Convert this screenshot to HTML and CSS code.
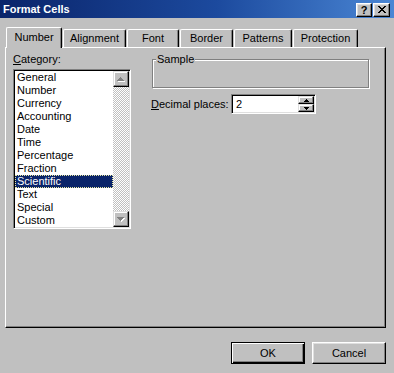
FILE: index.html
```html
<!DOCTYPE html>
<html>
<head>
<meta charset="utf-8">
<title>Format Cells</title>
<link rel="stylesheet" href="styles.css">
</head>
<body>
<div class="window">
  <div class="titlebar">
    <span class="title">Format Cells</span>
    <div class="tbtns">
      <span class="tbtn help">?</span>
      <span class="tbtn close"><svg width="8" height="7" viewBox="0 0 8 7"><path d="M0 0h2v1H0zM6 0h2v1H6zM1 1h2v1H1zM5 1h2v1H5zM2 2h4v1H2zM3 3h2v1H3zM2 4h4v1H2zM1 5h2v1H1zM5 5h2v1H5zM0 6h2v1H0zM6 6h2v1H6z" fill="#000"/></svg></span>
    </div>
  </div>

  <div class="tabs">
    <div class="tab active t-number">Number</div>
    <div class="tab t-align">Alignment</div>
    <div class="tab t-font">Font</div>
    <div class="tab t-border">Border</div>
    <div class="tab t-patterns">Patterns</div>
    <div class="tab t-protection">Protection</div>
  </div>

  <div class="panel">
    <div class="col-left">
      <div class="label"><u>C</u>ategory:</div>
      <div class="listbox">
        <ul class="items">
          <li>General</li>
          <li>Number</li>
          <li>Currency</li>
          <li>Accounting</li>
          <li>Date</li>
          <li>Time</li>
          <li>Percentage</li>
          <li>Fraction</li>
          <li class="selected">Scientific</li>
          <li>Text</li>
          <li>Special</li>
          <li>Custom</li>
        </ul>
        <div class="scrollbar">
          <div class="sbtn"><svg width="8" height="5" viewBox="0 0 8 5"><path d="M4 1h1v1h1v1h1v1h1v1H1V4h1V3h1V2h1z" fill="#fff"/><path d="M3 0h1v1h1v1h1v1h1v1H0V3h1V2h1V1h1z" fill="#808080"/></svg></div>
          <div class="track"></div>
          <div class="sbtn"><svg width="8" height="5" viewBox="0 0 8 5"><path d="M1 1h7v1H7v1H6v1H5v1H4V4H3V3H2V2H1z" fill="#fff"/><path d="M0 0h7v1H6v1H5v1H4v1H3V3H2V2H1V1H0z" fill="#808080"/></svg></div>
        </div>
      </div>
    </div>

    <div class="col-right">
      <fieldset class="group">
        <legend>Sample</legend>
      </fieldset>
      <div class="row">
        <span class="row-label"><u>D</u>ecimal places:</span>
        <div class="spin">
          <span class="spin-value">2</span>
          <div class="spin-btns">
            <div class="spbtn"><svg width="5" height="3" viewBox="0 0 5 3"><path d="M2 0h1v1h1v1h1v1H0V2h1V1h1z" fill="#000"/></svg></div>
            <div class="spbtn"><svg width="5" height="3" viewBox="0 0 5 3"><path d="M0 0h5v1H4v1H3v1H2V2H1V1H0z" fill="#000"/></svg></div>
          </div>
        </div>
      </div>
    </div>
  </div>

  <div class="buttons">
    <div class="btn default">OK</div>
    <div class="btn">Cancel</div>
  </div>
</div>
</body>
</html>
```
FILE: styles.css
```css
* { box-sizing: border-box; }
html, body { margin: 0; padding: 0; }
body {
  width: 394px;
  height: 373px;
  overflow: hidden;
  background: #c0c0c0;
  font-family: "Liberation Sans", Arial, sans-serif;
  font-size: 11px;
  color: #000;
}
.window { width: 394px; height: 373px; }

.titlebar {
  height: 18px;
  display: flex;
  align-items: center;
  justify-content: space-between;
  padding: 0 4px 0 3px;
  background: linear-gradient(to right, #0a246a 0%, #1c4a9e 55%, #4a86d4 100%);
}
.title { color: #fff; font-weight: bold; font-size: 11px; line-height: 14px; }
.tbtns { display: flex; gap: 1px; margin-top: 1px; }
.tbtn {
  width: 16px;
  height: 14px;
  display: flex;
  align-items: center;
  justify-content: center;
  background: #c0c0c0;
  border: 1px solid;
  border-color: #fff #000 #000 #fff;
  box-shadow: inset -1px -1px #808080, inset 1px 1px #dfdfdf;
  font-weight: bold;
  font-size: 11px;
  line-height: 12px;
}
.tbtn.close { width: 17px; }

.tabs {
  height: 20px;
  margin-top: 9px;
  padding-left: 6px;
  display: flex;
  align-items: flex-end;
  gap: 1px;
  position: relative;
  z-index: 2;
}
.tab {
  height: 18px;
  border: 1px solid;
  border-bottom: none;
  border-color: #fff #000 #000 #fff;
  border-radius: 2px 2px 0 0;
  box-shadow: inset -1px 0 #808080;
  background: #c0c0c0;
  text-align: center;
  line-height: 16px;
}
.tab.active { height: 21px; margin-bottom: -1px; line-height: 18px; }
.t-number { width: 56px; }
.t-align { width: 63px; }
.t-font { width: 52px; }
.t-border { width: 53px; }
.t-patterns { width: 58px; }
.t-protection { width: 65px; }

.panel {
  margin-left: 5px;
  width: 381px;
  height: 281px;
  border: 1px solid;
  border-color: #fff #000 #000 #fff;
  box-shadow: inset -1px -1px #808080;
  display: flex;
  gap: 20px;
  padding: 5px 0 0 7px;
}

.label { line-height: 13px; height: 13px; }
.listbox {
  margin-top: 3px;
  width: 118px;
  height: 160px;
  background: #fff;
  border: 1px solid;
  border-color: #808080 #fff #fff #808080;
  box-shadow: inset 1px 1px #000, inset -1px -1px #dfdfdf;
  padding: 1px;
  display: flex;
}
.items { list-style: none; margin: 0; padding: 0; flex: 1; }
.items li { height: 13px; line-height: 13px; padding-left: 2px; white-space: nowrap; }
.items li.selected {
  background: #0a246a;
  color: #fff;
  outline: 1px dotted #e8e8a0;
  outline-offset: -1px;
}
.scrollbar { width: 16px; display: flex; flex-direction: column; }
.sbtn {
  width: 16px;
  height: 16px;
  background: #c0c0c0;
  border: 1px solid;
  border-color: #dfdfdf #000 #000 #dfdfdf;
  box-shadow: inset -1px -1px #808080, inset 1px 1px #fff;
  display: flex;
  align-items: center;
  justify-content: center;
}
.track {
  flex: 1;
  background: repeating-conic-gradient(#c0c0c0 0 25%, #fff 0 50%) 0 0 / 2px 2px;
}

.col-right { display: flex; flex-direction: column; width: 218px; }
.group {
  margin: 0 0 0 1px;
  padding: 0;
  width: 217px;
  height: 35px;
  border: 1px solid #808080;
  box-shadow: 1px 1px #fff, inset 1px 1px #fff;
}
.group legend {
  margin-left: 3px;
  padding: 0 1px;
  background: #c0c0c0;
  line-height: 13px;
  font-size: 11px;
}
.row { display: flex; align-items: center; margin-top: 6px; }
.row-label { width: 80px; }
.spin {
  width: 85px;
  height: 20px;
  background: #fff;
  border: 1px solid;
  border-color: #808080 #fff #fff #808080;
  box-shadow: inset 1px 1px #000, inset -1px -1px #dfdfdf;
  padding: 1px;
  display: flex;
  align-items: stretch;
}
.spin-value { flex: 1; padding-left: 3px; line-height: 16px; }
.spin-btns { width: 16px; display: flex; flex-direction: column; }
.spbtn {
  height: 8px;
  background: #c0c0c0;
  border: 1px solid;
  border-color: #dfdfdf #000 #000 #dfdfdf;
  box-shadow: inset -1px -1px #808080, inset 1px 1px #fff;
  display: flex;
  align-items: center;
  justify-content: center;
}

.buttons {
  display: flex;
  justify-content: flex-end;
  gap: 7px;
  padding-right: 8px;
  margin-top: 14px;
}
.btn {
  width: 74px;
  height: 22px;
  border: 1px solid;
  border-color: #fff #000 #000 #fff;
  box-shadow: inset -1px -1px #808080, inset 1px 1px #dfdfdf;
  text-align: center;
  line-height: 20px;
}
.btn.default {
  border-color: #000;
  box-shadow: inset 1px 1px #fff, inset -1px -1px #000, inset -2px -2px #808080;
}
```
